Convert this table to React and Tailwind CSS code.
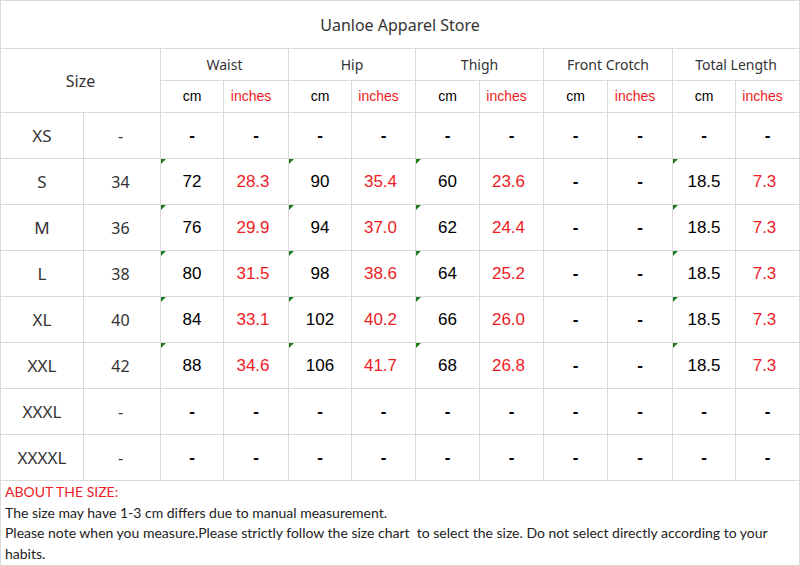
import React from "react";

const groups = ["Waist", "Hip", "Thigh", "Front Crotch", "Total Length"];

const rows = [
  { size: "XS", num: "-", vals: ["-", "-", "-", "-", "-", "-", "-", "-", "-", "-"] },
  { size: "S", num: "34", vals: ["72", "28.3", "90", "35.4", "60", "23.6", "-", "-", "18.5", "7.3"], mark: true },
  { size: "M", num: "36", vals: ["76", "29.9", "94", "37.0", "62", "24.4", "-", "-", "18.5", "7.3"], mark: true },
  { size: "L", num: "38", vals: ["80", "31.5", "98", "38.6", "64", "25.2", "-", "-", "18.5", "7.3"], mark: true },
  { size: "XL", num: "40", vals: ["84", "33.1", "102", "40.2", "66", "26.0", "-", "-", "18.5", "7.3"], mark: true },
  { size: "XXL", num: "42", vals: ["88", "34.6", "106", "41.7", "68", "26.8", "-", "-", "18.5", "7.3"], mark: true },
  { size: "XXXL", num: "-", vals: ["-", "-", "-", "-", "-", "-", "-", "-", "-", "-"] },
  { size: "XXXXL", num: "-", vals: ["-", "-", "-", "-", "-", "-", "-", "-", "-", "-"] },
];

// columns that carry the little green corner marker
const markedCols = [0, 2, 4, 8];

const yahei = { fontFamily: '"Noto Sans", "Open Sans", sans-serif' };

const Corner = () => (
  <svg className="absolute left-0 top-0" width="5" height="5" viewBox="0 0 5 5">
    <polygon points="0,0 5,0 0,5" fill="#1f7a1f" />
  </svg>
);

const cellClass = (i, v) => {
  if (v === "-") return "text-black font-bold";
  if (i % 2 === 1) return "text-[#ee1c25] pr-[6px]";
  return "text-black";
};

export default function App() {
  return (
    <div className="w-[800px] h-[566px] bg-white">
      <div className="grid grid-cols-[82px_76px_62px_64px_62px_63px_63px_63px_63px_64px_62px_63px] gap-px p-px bg-[#dadada]">
        {/* Title */}
        <div
          className="col-span-12 h-[47px] bg-white flex items-center justify-center text-[16px] text-[#333]"
          style={yahei}
        >
          Uanloe Apparel Store
        </div>

        {/* Header rows */}
        <div
          className="col-span-2 row-span-2 bg-white flex items-center justify-center text-[16px] text-[#333]"
          style={yahei}
        >
          Size
        </div>
        {groups.map((g) => (
          <div
            key={g}
            className="col-span-2 h-[31px] bg-white flex items-center justify-center text-[14px] text-[#333]"
            style={yahei}
          >
            {g}
          </div>
        ))}
        {groups.map((g) => (
          <React.Fragment key={g + "-u"}>
            <div className="h-[31px] bg-white flex items-center justify-center text-[14px] text-black font-['Liberation_Sans',Arial,sans-serif]">
              cm
            </div>
            <div className="h-[31px] bg-white flex items-center justify-center pr-[10px] text-[14px] text-[#ee1c25] font-['Liberation_Sans',Arial,sans-serif]">
              inches
            </div>
          </React.Fragment>
        ))}

        {/* Data rows */}
        {rows.map((r) => (
          <React.Fragment key={r.size}>
            <div
              className="h-[45px] bg-white flex items-center justify-center text-[17px] text-[#333]"
              style={yahei}
            >
              {r.size}
            </div>
            <div
              className="h-[45px] bg-white flex items-center justify-center pr-[3px] text-[16px] text-[#333]"
              style={yahei}
            >
              {r.num}
            </div>
            {r.vals.map((v, i) => (
              <div
                key={i}
                className={
                  "relative h-[45px] bg-white flex items-center justify-center text-[17px] font-['Liberation_Sans',Arial,sans-serif] " +
                  cellClass(i, v)
                }
              >
                {r.mark && markedCols.includes(i) && <Corner />}
                {v}
              </div>
            ))}
          </React.Fragment>
        ))}

        {/* Notes */}
        <div className="col-span-12 h-[84px] bg-white px-[4px] pt-[1px] text-[14px] leading-[20.5px] text-[#222] font-['Lato','Liberation_Sans',sans-serif]">
          <p className="text-[#ee1c25]">ABOUT THE SIZE:</p>
          <p>The size may have 1-3 cm differs due to manual measurement.</p>
          <p>
            Please note when you measure.Please strictly follow the size chart&nbsp; to select the size. Do not select directly according to your habits.
          </p>
        </div>
      </div>
    </div>
  );
}
